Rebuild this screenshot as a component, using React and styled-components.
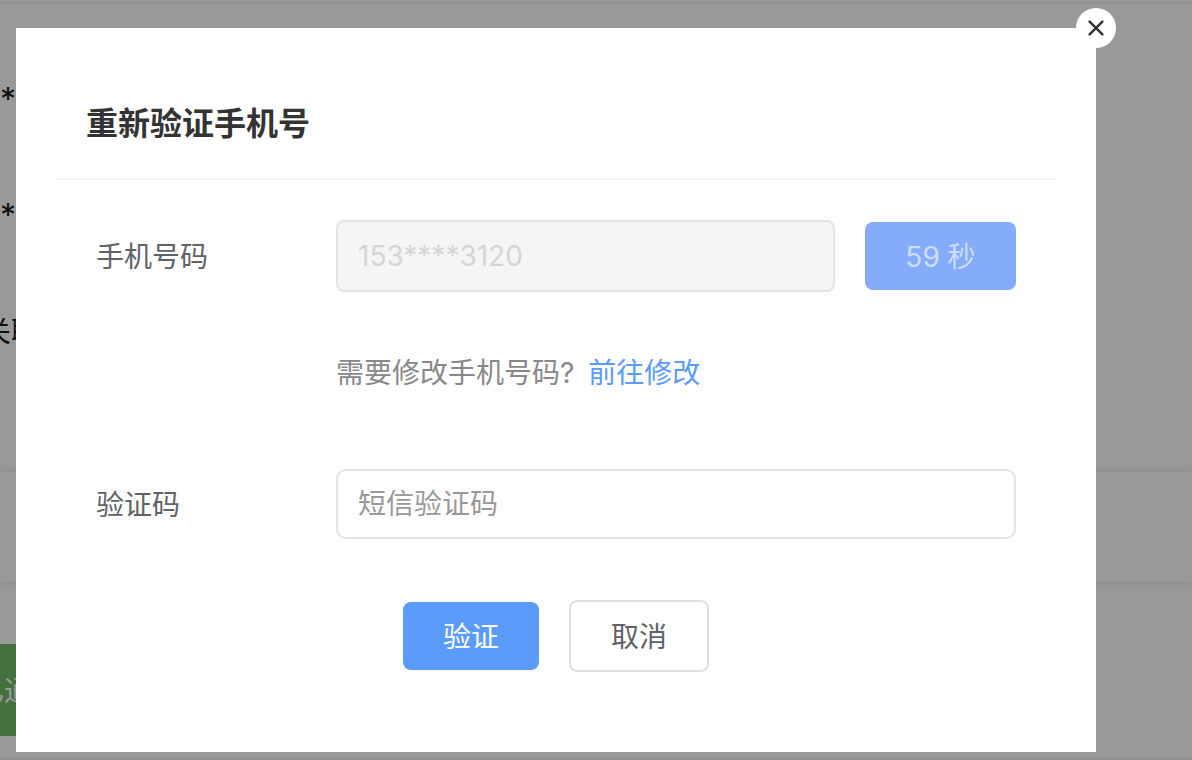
import React, { useState } from "react";
import styled, { createGlobalStyle } from "styled-components";

const GlobalStyle = createGlobalStyle`
    *{
        box-sizing: border-box;
    }
    body{
        margin: 0;
        background: #fff;
        font-family: Inter, "Noto Sans CJK SC", sans-serif;
        font-size: 28px;
        line-height: 40px;
        color: #606266;
    }
    button, input{
        font: inherit;
    }
`

const Page = styled.div`
    position: relative;
    overflow: hidden;
    min-height: 100vh;
`
const Account = styled.main`
    display: flex;
    flex-direction: column;
    align-items: stretch;
    color: #1c1c1c;
`
const Info = styled.section`
    height: 470px;
    margin-top: 2px;
    padding-top: 38px;
    border-top: 2px solid #f2f2f2;
`
const InfoRow = styled.div`
    height: 116px;
    display: flex;
    align-items: center;
    margin-left: ${props => props.$shift || 0}px;
    font-size: ${props => props.$masked ? 32 : 28}px;
    white-space: nowrap;
`
const Band = styled.section`
    height: 110px;
    box-shadow: 0 0 8px rgba(0, 0, 0, 0.12);
`
const Status = styled.section`
    padding: 62px 0 22px;
    border-bottom: 2px solid #f2f2f2;
`
const StatusTag = styled.div`
    width: 200px;
    height: 92px;
    margin-left: -64px;
    padding: 2px 0 0 40px;
    display: flex;
    align-items: center;
    background: #70bb64;
    color: #fff;
`

const Overlay = styled.div`
    position: absolute;
    inset: 0;
    padding: 28px 96px 8px 16px;
    display: flex;
    align-items: flex-start;
    background: rgba(0, 0, 0, 0.4);
`
const Dialog = styled.div`
    position: relative;
    flex: 1;
    padding: 0 40px 80px;
    background: #fff;
`
const CloseButton = styled.button`
    position: absolute;
    top: -20px;
    right: -20px;
    width: 40px;
    height: 40px;
    padding: 0;
    border: none;
    border-radius: 50%;
    background: #fff;
    color: #303133;
    display: flex;
    align-items: center;
    justify-content: center;
    cursor: pointer;
`
const Header = styled.header`
    padding: 72px 30px 30px;
    border-bottom: 2px solid #f5f5f5;
`
const Title = styled.h2`
    margin: 0;
    font-size: 32px;
    line-height: 48px;
    font-weight: 700;
    color: #333;
`
const Form = styled.form`
    padding: 40px 40px 0;
`
const Row = styled.div`
    display: flex;
    align-items: center;
`
const Label = styled.label`
    width: 240px;
    padding-top: 2px;
    flex-shrink: 0;
`
const Input = styled.input`
    flex: 1;
    min-width: 0;
    height: 70px;
    padding: 0 20px;
    border: 2px solid #e4e4e4;
    border-radius: 10px;
    outline: none;
    background: #fff;
    color: #333;
    &::placeholder{
        color: #999;
        opacity: 1;
    }
    &:disabled{
        height: 72px;
        border-radius: 8px;
        background: #f5f5f5;
        color: #d5d5d5;
    }
`
const Button = styled.button`
    height: 68px;
    padding: 2px 40px 0;
    border: none;
    border-radius: 8px;
    background: #5b9bf9;
    color: #fff;
    cursor: pointer;
    &:disabled{
        background: #84acfa;
        color: #cddefd;
        cursor: not-allowed;
    }
`
const CodeButton = styled(Button)`
    min-width: 151px;
    margin-left: 30px;
`
const CancelButton = styled(Button)`
    height: 72px;
    border: 2px solid #dcdfe6;
    background: #fff;
    color: #606266;
`
const Hint = styled.p`
    margin: 61px 0 76px 240px;
    color: #888;
`
const Link = styled.a`
    margin-left: 14px;
    color: #5b9bf9;
    text-decoration: none;
`
const Actions = styled.div`
    margin: 61px 0 0 307px;
    display: flex;
    align-items: center;
    gap: 30px;
`

const CloseIcon = () => (
    <svg width="18" height="18" viewBox="0 0 18 18" fill="none" stroke="currentColor" strokeWidth="2.4" strokeLinecap="round">
        <path d="M2.6 2.6L15.4 15.4M15.4 2.6L2.6 15.4"/>
    </svg>
)

export default () => {
    const [code, setCode] = useState("")

    return(
        <Page>
            <GlobalStyle/>
            <Account>
                <Info>
                    <InfoRow $masked>****</InfoRow>
                    <InfoRow $masked>****</InfoRow>
                    <InfoRow $shift={-17}>关联</InfoRow>
                </Info>
                <Band/>
                <Status>
                    <StatusTag>已通过</StatusTag>
                </Status>
            </Account>
            <Overlay>
                <Dialog role="dialog" aria-labelledby="title">
                    <CloseButton type="button" aria-label="关闭">
                        <CloseIcon/>
                    </CloseButton>
                    <Header>
                        <Title id="title">重新验证手机号</Title>
                    </Header>
                    <Form onSubmit={e => e.preventDefault()}>
                        <Row>
                            <Label htmlFor="phone">手机号码</Label>
                            <Input id="phone" value="153****3120" disabled/>
                            <CodeButton type="button" disabled>59 秒</CodeButton>
                        </Row>
                        <Hint>
                            需要修改手机号码?
                            <Link href="#">前往修改</Link>
                        </Hint>
                        <Row>
                            <Label htmlFor="code">验证码</Label>
                            <Input id="code" placeholder="短信验证码" value={code} onChange={e => setCode(e.target.value)}/>
                        </Row>
                        <Actions>
                            <Button type="submit">验证</Button>
                            <CancelButton type="button">取消</CancelButton>
                        </Actions>
                    </Form>
                </Dialog>
            </Overlay>
        </Page>
    )
}
